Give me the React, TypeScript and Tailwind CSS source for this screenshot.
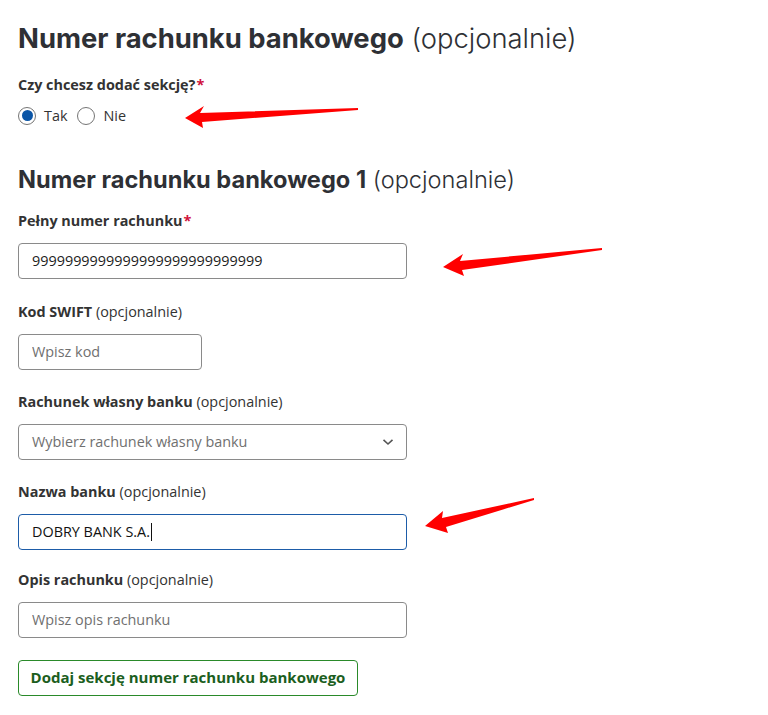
import React from 'react';

const sans = "font-['Open_Sans',_'Liberation_Sans',_sans-serif]";
const head = "font-['Inter',_'Liberation_Sans',_sans-serif]";

function Label({ text, optional, required }: { text: string; optional?: boolean; required?: boolean }) {
  return (
    <div className="h-5 text-[14.4px] leading-5 text-[#333]">
      <span className="font-bold">{text}</span>
      {optional && <span className="font-normal"> (opcjonalnie)</span>}
      {required && <span className="ml-[1px] font-bold text-[#d0103a]">*</span>}
    </div>
  );
}

function Radio({ label, checked }: { label: string; checked?: boolean }) {
  return (
    <label className="flex items-center gap-2">
      <span className="flex h-[18px] w-[18px] items-center justify-center rounded-full border border-[#757575] bg-white">
        {checked && <span className="h-[11px] w-[11px] rounded-full bg-[#0b55a6]" />}
      </span>
      <span className="text-[14.4px] text-[#333]">{label}</span>
    </label>
  );
}

function Arrows() {
  return (
    <svg className="pointer-events-none absolute left-0 top-0" width="768" height="715">
      <polygon fill="#ff0000" points="185,118 204,106 200,113 358,108 358,110 202,122 203,128" />
      <polygon fill="#ff0000" points="443,267 463,254 460,261 602,248 602,250 462,270 464,276" />
      <polygon fill="#ff0000" points="425,526 443,511 442,518 534,498 534,500 446,527 448,533" />
    </svg>
  );
}

export default function App() {
  const inputBox = 'h-9 rounded border border-[#8a8a8a] bg-white pl-[13px] text-[14.4px] text-[#222] outline-none placeholder:text-[#707070]';

  return (
    <div className={`relative h-[715px] w-[768px] overflow-hidden bg-white ${sans}`}>
      <div className="flex flex-col pl-[18px] pt-5">
        <h1 className={`h-9 text-[27.4px] leading-9 text-[#2e3035] ${head}`}>
          <span className="font-bold">Numer rachunku bankowego</span>{' '}
          <span className="font-light">(opcjonalnie)</span>
        </h1>

        <div className="mt-[19px]">
          <Label text="Czy chcesz dodać sekcję?" required />
        </div>
        <div className="mt-[10px] flex gap-[10px]">
          <Radio label="Tak" checked />
          <Radio label="Nie" />
        </div>

        <h2 className={`mt-[38px] h-[30px] text-[23.6px] leading-[30px] text-[#2e3035] ${head}`}>
          <span className="font-bold">Numer rachunku bankowego 1</span>{' '}
          <span className="font-light">(opcjonalnie)</span>
        </h2>

        <div className="mt-4 flex flex-col">
          <Label text="Pełny numer rachunku" required />
          <input className={`mt-3 w-[389px] ${inputBox}`} defaultValue="9999999999999999999999999999" readOnly />
        </div>

        <div className="mt-[23px] flex flex-col">
          <Label text="Kod SWIFT" optional />
          <input className={`mt-3 w-[184px] ${inputBox}`} placeholder="Wpisz kod" />
        </div>

        <div className="mt-[22px] flex flex-col">
          <Label text="Rachunek własny banku" optional />
          <div className={`mt-3 flex w-[389px] items-center justify-between pr-3 ${inputBox}`}>
            <span className="text-[#707070]">Wybierz rachunek własny banku</span>
            <svg width="12" height="8" viewBox="0 0 12 8" fill="none" stroke="#555" strokeWidth="1.6">
              <path d="M1.5 1.8 L6 6 L10.5 1.8" />
            </svg>
          </div>
        </div>

        <div className="mt-[22px] flex flex-col">
          <Label text="Nazwa banku" optional />
          <div className="mt-3 flex h-9 w-[389px] items-center rounded border border-[#1d5ca8] bg-white pl-[13px] text-[14.4px] text-[#111]">
            DOBRY BANK S.A.<span className="ml-[1px] h-[18px] w-px bg-[#111]" />
          </div>
        </div>

        <div className="mt-[20px] flex flex-col">
          <Label text="Opis rachunku" optional />
          <input className={`mt-3 w-[389px] ${inputBox}`} placeholder="Wpisz opis rachunku" />
        </div>

        <div className="mt-[22px]">
          <button className="h-9 w-[340px] rounded border border-[#2a8a2a] bg-white text-[15px] font-bold text-[#1b5e20]">
            Dodaj sekcję numer rachunku bankowego
          </button>
        </div>
      </div>
      <Arrows />
    </div>
  );
}
